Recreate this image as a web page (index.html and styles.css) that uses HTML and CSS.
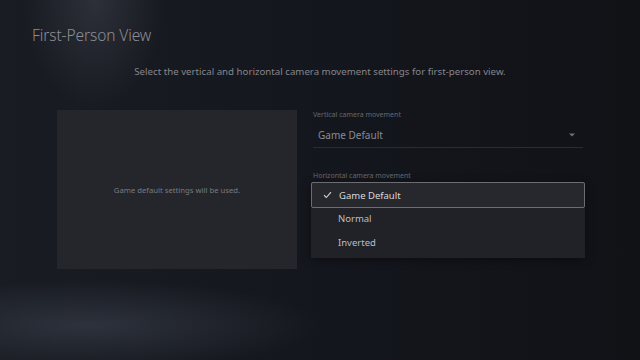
FILE: index.html
```html
<!DOCTYPE html>
<html lang="en">
<head>
  <meta charset="UTF-8" />
  <meta name="viewport" content="width=device-width, initial-scale=1.0" />
  <title>First-Person View</title>
  <link rel="stylesheet" href="styles.css">
</head>
<body>
  <div class="screen">
    <h1 class="title">First-Person View</h1>
    <p class="subtitle">Select the vertical and horizontal camera movement settings for first-person view.</p>

    <div class="content">
      <div class="preview">
        <span>Game default settings will be used.</span>
      </div>

      <div class="settings">
        <div class="field">
          <div class="field-label">Vertical camera movement</div>
          <div class="select">
            <span>Game Default</span>
            <svg class="caret" width="6" height="4" viewBox="0 0 6 4"><path d="M0 0.5 L6 0.5 L3 3.5 Z" fill="#6f7076"/></svg>
          </div>
        </div>

        <div class="field field-open">
          <div class="field-label">Horizontal camera movement</div>
          <ul class="menu">
            <li class="option selected">
              <svg class="check" width="9" height="8" viewBox="0 0 9 8"><path d="M1 4.2 L3.3 6.5 L8 1.2" fill="none" stroke="#d6d6da" stroke-width="1.1"/></svg>
              Game Default
            </li>
            <li class="option">Normal</li>
            <li class="option">Inverted</li>
          </ul>
        </div>
      </div>
    </div>
  </div>
</body>
</html>
```

FILE: styles.css
```css
html, body {
  margin: 0;
  height: 100%;
}
body {
  font-family: "Noto Sans", "Open Sans", sans-serif;
  background: #14161c;
  overflow: hidden;
}
.screen {
  width: 640px;
  height: 360px;
  box-sizing: border-box;
  padding: 25px 0 0 0;
  background:
    radial-gradient(ellipse 70px 110px at 95px 0px, rgba(120, 124, 140, 0.22), rgba(0, 0, 0, 0) 100%),
    radial-gradient(ellipse 230px 45px at 90px 325px, rgba(70, 78, 92, 0.45), rgba(0, 0, 0, 0) 100%),
    linear-gradient(90deg, #191c23 0%, #14161d 55%, #111216 100%);
}
.title {
  margin: 0 0 0 32px;
  font-size: 15.5px;
  font-weight: 300;
  color: #8c8d93;
  line-height: 20px;
  letter-spacing: -0.1px;
}
.subtitle {
  margin: 20px 0 0 0;
  text-align: center;
  font-size: 9.7px;
  color: #85868c;
  line-height: 14px;
}
.content {
  display: flex;
  margin: 31px 0 0 57px;
  gap: 14px;
}
.preview {
  width: 240px;
  height: 159px;
  background: #24262b;
  display: flex;
  align-items: center;
  justify-content: center;
  font-size: 7.7px;
  color: #7a7b81;
}
.settings {
  width: 274px;
  display: flex;
  flex-direction: column;
}
.field-label {
  font-size: 7px;
  color: #66676d;
  line-height: 10px;
  margin-left: 2px;
}
.select {
  display: flex;
  align-items: center;
  justify-content: space-between;
  margin: 2px 0 0 2px;
  width: 270px;
  height: 26px;
  padding: 0 8px 0 5px;
  box-sizing: border-box;
  border-bottom: 1px solid #2a2c32;
  font-size: 10px;
  color: #8a8b91;
}
.caret {
  margin-top: 1px;
}
.field-open {
  margin-top: 23px;
}
.menu {
  list-style: none;
  margin: 1px 0 0 0;
  padding: 0 0 2px 0;
  width: 274px;
  background: #202227;
  box-shadow: 0 2px 8px rgba(0, 0, 0, 0.4);
}
.option {
  display: flex;
  align-items: center;
  height: 24px;
  box-sizing: border-box;
  padding: 0 0 3px 27px;
  font-size: 9.5px;
  color: #bdbec3;
}
.option.selected {
  height: 26px;
  padding: 0 0 0 11px;
  gap: 7px;
  border: 1px solid #6c6d73;
  border-radius: 2px;
  background: #26282d;
  color: #d8d8dc;
}
```
